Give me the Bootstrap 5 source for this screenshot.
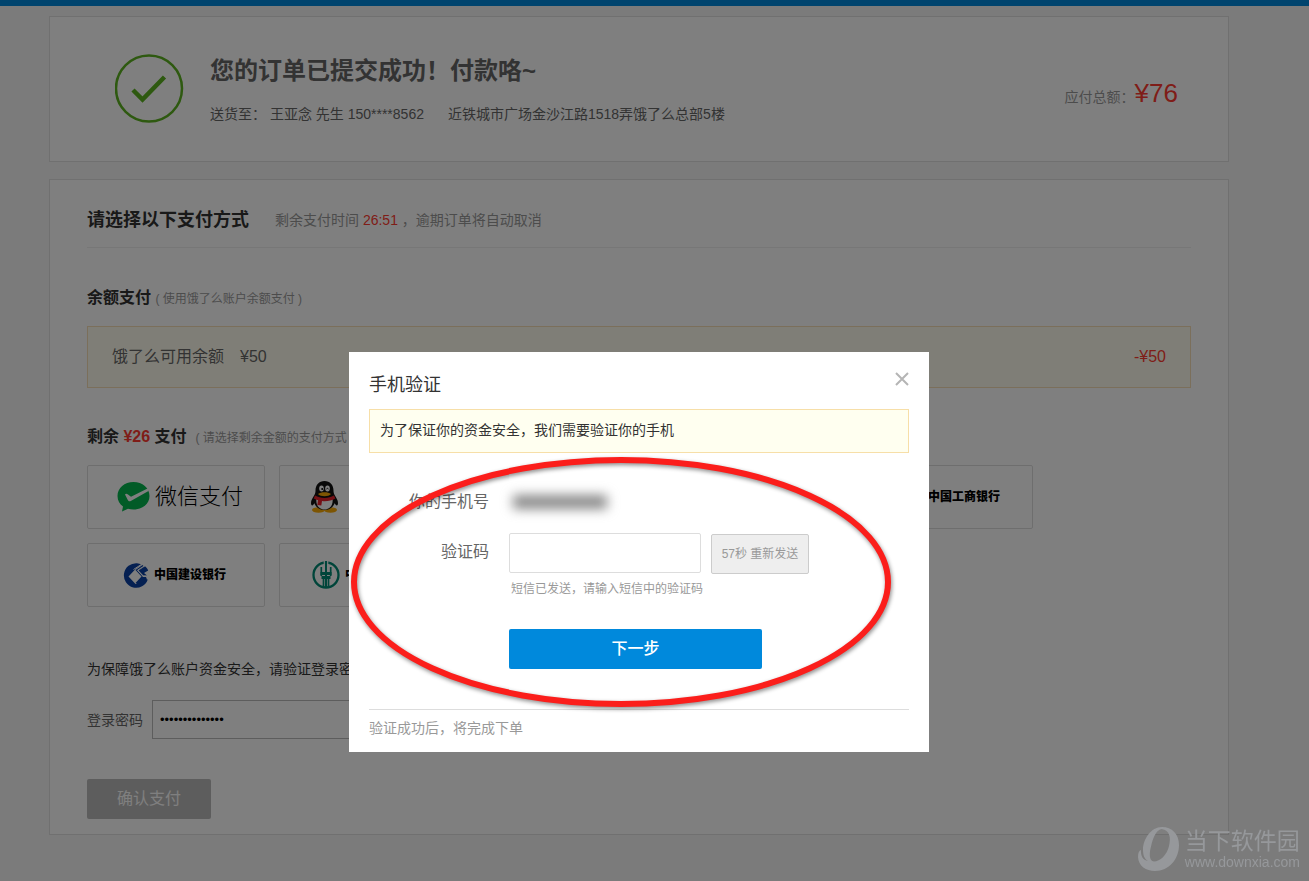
<!DOCTYPE html>
<html lang="zh-CN">
<head>
<meta charset="utf-8">
<meta name="viewport" content="width=device-width, initial-scale=1">
<title>订单支付</title>
<link href="https://cdn.jsdelivr.net/npm/bootstrap@5.3.0/dist/css/bootstrap.min.css" rel="stylesheet">
<style>
  body { font-family: "Liberation Sans", "Noto Sans CJK SC", sans-serif; font-size: 14px; line-height: 24px; color: #333; background: #f7f7f7; }
  .top-strip { height: 6px; background: #0089dc; }
  .page-shell { max-width: 1278px; padding: 10px 49px 46px; }
  .panel { background: #fff; border: 1px solid #e0e0e0; }
  .panel-result { padding: 36px 50px 37px 65px; gap: 25px; margin-bottom: 17px; }
  .result-title { font-size: 24px; line-height: 36px; font-weight: 700; color: #666; margin-bottom: 15px; }
  .result-address { line-height: 20px; color: #666; gap: 24px; }
  .total { padding-top: 12px; }
  .amount { font-size: 26px; color: #ff3b30; }
  .muted { color: #999; }
  .alarm { color: #ff3b30; }
  .panel-pay { padding: 26px 37px 15px; }
  .pay-head { gap: 26px; line-height: 28px; padding-bottom: 13px; border-bottom: 1px solid #eee; margin-bottom: 38px; }
  .pay-head h2 { font-size: 18px; line-height: 28px; font-weight: 700; }
  .section-title { font-size: 16px; line-height: 24px; font-weight: 700; margin-bottom: 16px; }
  .section-title small { font-size: 12px; line-height: 12px; font-weight: 400; color: #999; }
  .balance { height: 62px; padding: 0 24px; font-size: 16px; color: #666; background: #fffdee; border: 1px solid #f7dfb6; margin-bottom: 37px; }
  .methods { display: grid; grid-template-columns: repeat(5, 178px); gap: 14px; margin-bottom: 50px; }
  .method { height: 64px; padding: 0 29px; gap: 5px; background: #fff; border: 1px solid #ddd; border-radius: 2px; color: #000; white-space: nowrap; }
  .method svg { flex: none; }
  .method-bank { padding: 0 32px 0 35px; font-size: 12px; font-weight: 900; }
  .method-last { grid-column: 5; }
  .method-first { grid-column: 1; }
  .wechat { font-size: 22px; font-weight: 300; }
  .safety { margin-bottom: 19px; }
  .password-row { gap: 9px; margin-bottom: 40px; color: #666; }
  .password-row input { width: 260px; height: 39px; padding: 0 7px; border-color: #bbb; border-radius: 0; color: #000; font-size: 13px; }
  .btn-pay { width: 124px; height: 40px; padding: 0; font-size: 16px; border-radius: 2px; border: 0; }
  .btn-pay:disabled { background: #bbb; color: #fff; opacity: 1; }
  .modal { --bs-modal-width: 580px; padding-right: 31px; }
  .modal-dialog { margin-top: 352px; }
  .modal-content { border: 0; border-radius: 0; padding: 20px 20px 12px; color: #333; }
  .modal-title { font-size: 18px; line-height: 27px; font-weight: 400; }
  .close-x { width: 14px; height: 14px; }
  .notice { height: 44px; padding: 0 10px; background: #fffff0; border: 1px solid #f7dfa8; margin: 10px 0 36px; line-height: 41px; }
  .verify { grid-template-columns: 120px 1fr; column-gap: 20px; font-size: 16px; color: #666; }
  .verify label, .verify-label { text-align: right; }
  .verify-label { line-height: 26px; }
  .code-label { padding-top: 25px; }
  .masked { width: 94px; height: 14px; background: #888; filter: blur(6px); margin: 6px 0 0 4px; }
  .code-row { margin-top: 18px; gap: 10px; }
  .code-row input { width: 192px; height: 40px; border-color: #ddd; border-radius: 2px; }
  .btn-resend, .btn-resend:disabled { width: 98px; height: 40px; padding: 0; font-size: 12px; background: #eee; border: 1px solid #ccc; color: #999; border-radius: 2px; opacity: 1; margin-top: 1px; }
  .help { font-size: 12px; line-height: 20px; color: #999; margin: 5px 0 30px 2px; }
  .btn-next { width: 253px; height: 40px; padding: 0; font-size: 16px; font-weight: 500; background: #0089dc; color: #fff; border-radius: 2px; border: 0; }
  .btn-next:hover { background: #0079c4; color: #fff; }
  .modal-foot { border-top: 1px solid #ddd; margin-top: 40px; padding-top: 6px; color: #999; }
  .marker { left: 0; top: 0; pointer-events: none; }
  .marker ellipse { filter: drop-shadow(1px 2px 2px rgba(0, 0, 0, .45)); }
  .watermark { right: 9px; bottom: 9px; z-index: 1080; color: #96989b; gap: 5px; pointer-events: none; }
  .watermark-name { font-size: 23px; line-height: 26px; font-weight: 400; }
  .watermark-site { font-size: 14px; line-height: 16px; }
</style>
</head>
<body>
<div class="top-strip"></div>
<main class="page-shell">
  <section class="panel panel-result d-flex align-items-center">
    <svg width="70" height="70" viewBox="0 0 70 70" fill="none" stroke="#5cb321" aria-hidden="true">
      <circle cx="34" cy="34.500" r="33" stroke-width="2.500"/>
      <path d="M18 36 27.500 45.500 49.500 23" stroke-width="4.500"/>
    </svg>
    <div>
      <h1 class="result-title">您的订单已提交成功！付款咯~</h1>
      <div class="result-address d-flex"><span>送货至： 王亚念 先生 150****8562</span><span>近铁城市广场金沙江路1518弄饿了么总部5楼</span></div>
    </div>
    <div class="total ms-auto muted">应付总额：<span class="amount">¥76</span></div>
  </section>

  <section class="panel panel-pay">
    <div class="pay-head d-flex align-items-center">
      <h2 class="mb-0">请选择以下支付方式</h2>
      <span class="muted">剩余支付时间 <span class="alarm">26:51</span> ，逾期订单将自动取消</span>
    </div>
    <h3 class="section-title">余额支付 <small>( 使用饿了么账户余额支付 )</small></h3>
    <div class="balance d-flex align-items-center">
      <span>饿了么可用余额</span><span class="ms-3">¥50</span><span class="ms-auto alarm">-¥50</span>
    </div>
    <h3 class="section-title">剩余 <span class="alarm">¥26</span> 支付 &nbsp;<small>( 请选择剩余金额的支付方式 )</small></h3>
    <div class="methods">
      <button type="button" class="method d-flex align-items-center">
        <svg width="33" height="30" viewBox="0 0 33 30" aria-hidden="true">
          <path fill="#05b64f" d="M16.500 0C7.500 0 .5 6 .5 14c0 4.500 2.100 8 5.500 10.500L5 29.500l6-2.700c1.700.5 3.500.7 5.500.7C25.500 27.500 32.500 22 32.500 14S25.500 0 16.500 0Z"/>
          <path fill="#fff" d="M8 12.500c.7-1.200 2-.8 3 0l3 2.200L30.500 6.500c.8 1 .9 1.400 1 2.500L13.800 19c-1.500.7-2.300.2-3-1Z"/>
        </svg>
        <span class="wechat">微信支付</span>
      </button>
      <button type="button" class="method d-flex align-items-center" title="QQ">
        <svg width="31" height="34" viewBox="0 0 31 34" aria-hidden="true">
          <ellipse cx="9.500" cy="30" rx="6.500" ry="2.700" fill="#faab07"/>
          <ellipse cx="21.500" cy="30" rx="6.500" ry="2.700" fill="#faab07"/>
          <path fill="#111" d="M15.500 1C10 1 6.500 5 6.500 10.500c0 2-.4 3-1.100 4.500C3.500 18 2 20.500 2 23c0 1.700.6 2.600 1.200 2.500.8-.1 1.500-1 2.200-2.200C6.500 27 10.500 30 15.500 30s9-3 10.100-6.700c.7 1.200 1.400 2.100 2.200 2.200.7.100 1.200-.8 1.200-2.500 0-2.500-1.500-5-3.400-8-.7-1.500-1.100-2.500-1.100-4.500C24.500 5 21 1 15.500 1Z"/>
          <path fill="#fff" d="M7.500 18c-1 6.500 2 11.500 8 11.500s9-5 8-11.500l-8 2.500Z"/>
          <ellipse cx="12.500" cy="8.500" rx="2.300" ry="3" fill="#fff"/><ellipse cx="18.500" cy="8.500" rx="2.300" ry="3" fill="#fff"/>
          <circle cx="13.200" cy="9" r="1"/><path d="M17.500 9.300c.4-1.400 1.500-1.400 2 0" fill="none" stroke="#000" stroke-width=".8"/>
          <path fill="#faab07" d="M9 14c3-2.200 10-2.200 13 0-2.500 3-10.500 3-13 0Z"/>
          <path fill="#e8202a" d="M6 15.500c5.500 3.300 13.500 3.300 19 0l1.300 3c-3.800 2.400-9 3.200-13.300 2.600l-.7 4.400-4-.6.700-4.600c-1.500-.5-2.800-1-4.200-1.800Z"/>
        </svg>
      </button>
      <button type="button" class="method method-bank method-last d-flex align-items-center justify-content-end">中国工商银行</button>
      <button type="button" class="method method-bank method-first d-flex align-items-center">
        <svg width="26" height="28" viewBox="0 0 26 28" aria-hidden="true">
          <path d="M14 2.200A12.300 12.300 0 1 0 24.800 18.500H20l-7.500 4.500L5.500 15.500l8-8.500 5-3.500A12 12 0 0 0 14 2.200Z" fill="#0a41a4"/>
          <path d="M12.500 9.500 18.500 15.500 12.500 21.500 6.500 15.500Z" fill="#fff"/>
          <path d="M12.500 9 18.500 15.500 12.500 22l5 1 6.500-4.500-1-2.500h-3l-5.500-6.500 6.500-4-1.500-1.500Z" fill="#0a41a4"/>
          <path d="M15.500 9.500 22 5.200c1.600 1.200 2.500 2.500 3.200 4.300L21 12l3 2.500h-4Z" fill="#0a41a4"/>
          <path d="m10.500 8.500 8.500-5.500M14.500 9.200 22 4.500M14.500 9.200l6 6h5" stroke="#fff" stroke-width="1" fill="none"/>
        </svg>
        <span>中国建设银行</span>
      </button>
      <button type="button" class="method method-bank d-flex align-items-center ps-4">
        <svg class="ms-2" width="28" height="28" viewBox="0 0 28 28" fill="none" stroke="#008a74" aria-hidden="true">
          <circle cx="14" cy="14" r="12.500" stroke-width="2.300"/>
          <path d="M12.300 0v4M15.700 0v4" stroke="#fff" stroke-width="1.200"/>
          <path d="M14 0v27" stroke-width="2"/>
          <path d="M9.300 6v9M18.700 6v9M11.500 25v-8M16.500 25v-8" stroke-width="1.700"/>
          <path d="M8.500 12.500h11M9.500 16.500h9" stroke-width="3"/>
        </svg>
        <span>中国农业银行</span>
      </button>
    </div>
    <p class="safety">为保障饿了么账户资金安全，请验证登录密码</p>
    <div class="password-row d-flex align-items-center">
      <label for="password">登录密码</label>
      <input id="password" class="form-control" type="password" value="12345678901234">
    </div>
    <button type="button" class="btn btn-pay d-block" disabled>确认支付</button>
  </section>
</main>

<div class="modal-backdrop show"></div>
<div class="modal d-block" tabindex="-1" role="dialog" aria-modal="true" aria-labelledby="verify-title">
  <div class="modal-dialog">
    <div class="modal-content">
      <div class="d-flex justify-content-between align-items-start">
        <h2 class="modal-title" id="verify-title">手机验证</h2>
        <button type="button" class="btn p-0 border-0 d-flex" title="关闭">
          <svg class="close-x" viewBox="0 0 14 14" stroke="#b5b5b5" stroke-width="2" aria-hidden="true"><path d="m1 1 12 12M13 1 1 13"/></svg>
        </button>
      </div>
      <div class="notice">为了保证你的资金安全，我们需要验证你的手机</div>
      <form class="verify d-grid">
        <span class="verify-label">你的手机号</span>
        <div><div class="masked"></div></div>
        <label for="code" class="code-label">验证码</label>
        <div>
          <div class="code-row d-flex">
            <input id="code" class="form-control" type="text">
            <button type="button" class="btn btn-resend" disabled>57秒 重新发送</button>
          </div>
          <p class="help">短信已发送，请输入短信中的验证码</p>
          <button type="button" class="btn btn-next d-block">下一步</button>
        </div>
      </form>
      <div class="modal-foot">验证成功后，将完成下单</div>
      <svg class="marker position-absolute w-100 h-100" viewBox="0 0 580 400" fill="none" aria-hidden="true">
        <ellipse cx="272" cy="230" rx="267" ry="122" stroke="#fb1e1b" stroke-width="6"/>
      </svg>
    </div>
  </div>
</div>

<div class="watermark position-fixed d-flex align-items-center">
  <svg width="44" height="46" viewBox="0 0 44 46" fill="#96989b" aria-hidden="true">
    <path fill-rule="evenodd" d="M26 1C15 1 7 13 7 24c0 5 1.500 9 5 11C7 34 4.500 30 5 24 3 24.500 2 27 2 31c.5 9 8 14 17 14 14 0 24-12 24-26C43 8 36 1 26 1Zm-.5 2C34 4 35 12 33 20c-2 9-9 15.500-15 15.500-5.500-.5-4.500-9.500-3-15C17 12 20 4 25.500 3Z"/>
  </svg>
  <div>
    <div class="watermark-name">当下软件园</div>
    <div class="watermark-site">www.downxia.com</div>
  </div>
</div>
<script src="https://cdn.jsdelivr.net/npm/bootstrap@5.3.0/dist/js/bootstrap.bundle.min.js"></script>
</body>
</html>
